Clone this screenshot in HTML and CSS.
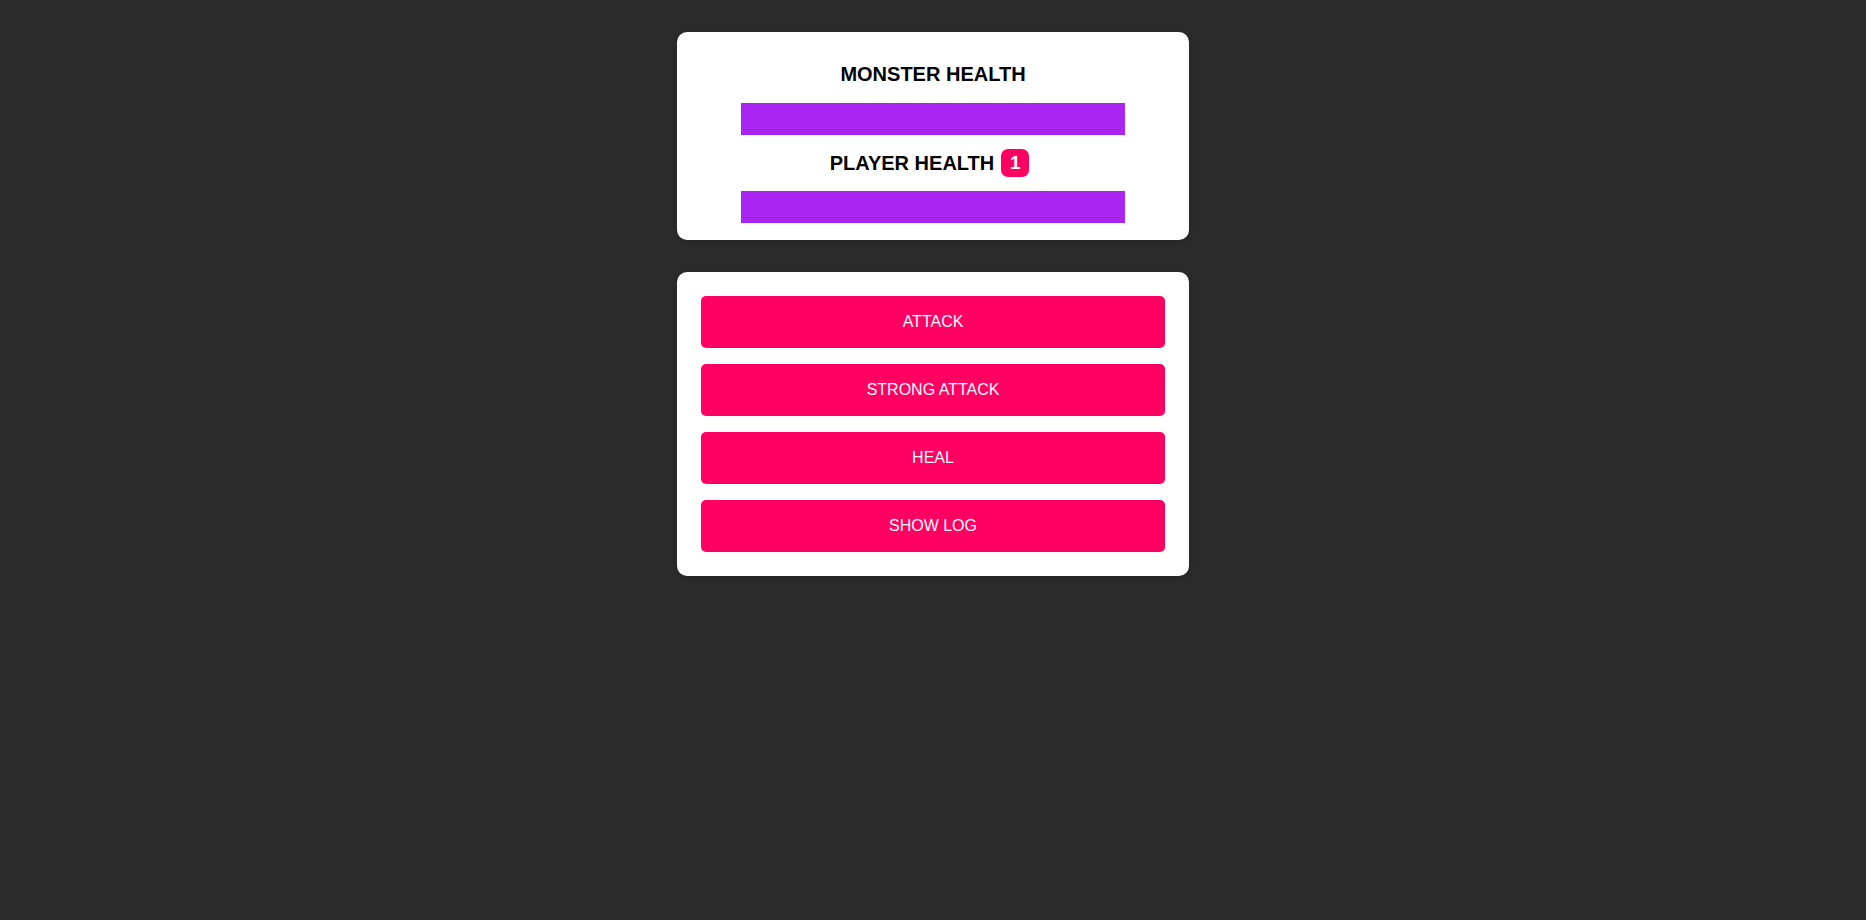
FILE: index.html
```html
<!DOCTYPE html>
<html lang="en">
<head>
<meta charset="UTF-8">
<title>Monster Killer</title>
<link rel="stylesheet" href="styles.css">
</head>
<body>
  <section class="card health">
    <h2 class="label">MONSTER HEALTH</h2>
    <div class="bar"></div>
    <div class="label-row">
      <h2 class="label">PLAYER HEALTH</h2>
      <span class="badge">1</span>
    </div>
    <div class="bar"></div>
  </section>
  <section class="card controls">
    <button class="btn">ATTACK</button>
    <button class="btn">STRONG ATTACK</button>
    <button class="btn">HEAL</button>
    <button class="btn">SHOW LOG</button>
  </section>
</body>
</html>
```
FILE: styles.css
```css
* { box-sizing: border-box; }
html, body {
  margin: 0;
  padding: 0;
  background: #2b2b2b;
  font-family: "Liberation Sans", Arial, sans-serif;
}
body {
  padding-top: 32px;
  display: flex;
  flex-direction: column;
  align-items: center;
  gap: 32px;
  min-height: 920px;
}
.card {
  width: 512px;
  background: #ffffff;
  border-radius: 10px;
  box-shadow: 0 2px 6px rgba(0, 0, 0, 0.12);
}
.health {
  padding: 30px 0 17px;
  display: flex;
  flex-direction: column;
  align-items: center;
}
.label {
  margin: 0;
  font-size: 20px;
  line-height: 24px;
  font-weight: bold;
  color: #000;
}
.health > .label { margin-bottom: 17px; }
.bar {
  width: 75%;
  height: 32px;
  background: #a926f2;
}
.label-row {
  display: flex;
  align-items: center;
  justify-content: center;
  gap: 7px;
  height: 28px;
  margin: 14px 7px 14px 0;
}
.badge {
  width: 28px;
  height: 28px;
  border-radius: 7px;
  background: #ff0062;
  color: #fff;
  font-weight: bold;
  font-size: 19px;
  display: flex;
  align-items: center;
  justify-content: center;
}
.controls {
  padding: 24px;
  display: flex;
  flex-direction: column;
  gap: 16px;
}
.btn {
  height: 52px;
  border: none;
  border-radius: 5px;
  background: #ff0062;
  color: #fff;
  font-family: "Liberation Sans", Arial, sans-serif;
  font-size: 16px;
  cursor: pointer;
}
```
